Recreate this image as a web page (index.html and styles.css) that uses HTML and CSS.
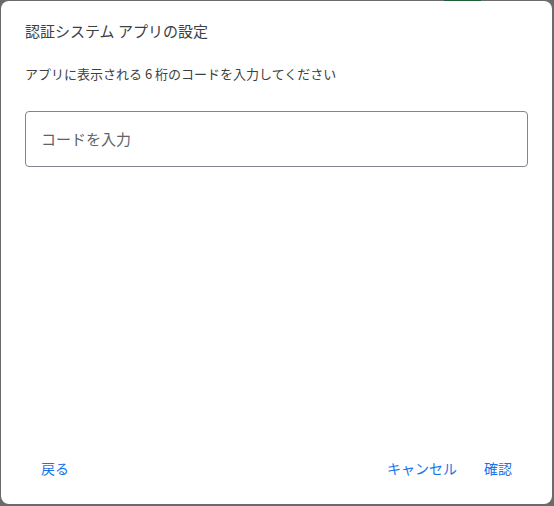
FILE: index.html
```html
<!DOCTYPE html>
<html lang="ja">
<head>
<meta charset="utf-8">
<link rel="stylesheet" href="styles.css">
</head>
<body>
<div class="backdrop">
  <div class="topbar"><span class="green"></span></div>
  <div class="dialog">
    <h1 class="title">認証システム アプリの設定</h1>
    <p class="desc">アプリに表示される 6 桁のコードを入力してください</p>
    <div class="field"><span class="placeholder">コードを入力</span></div>
    <div class="footer">
      <button class="btn">戻る</button>
      <div class="right">
        <button class="btn">キャンセル</button>
        <button class="btn">確認</button>
      </div>
    </div>
  </div>
</div>
</body>
</html>
```
FILE: styles.css
```css
html, body {
  margin: 0;
  padding: 0;
}
body {
  background: #6a6a6a;
  font-family: "Noto Sans CJK JP", "Noto Sans", sans-serif;
  width: 554px;
  height: 506px;
  overflow: hidden;
}
.backdrop {
  position: relative;
  width: 554px;
  height: 506px;
  padding: 1px 2px 2px 1px;
  box-sizing: border-box;
}
.topbar {
  position: absolute;
  top: 0;
  left: 444px;
  width: 37px;
  height: 1px;
  background: #1e5e36;
}
.dialog {
  background: #fff;
  border-radius: 8px;
  height: 100%;
  box-sizing: border-box;
  padding: 19px 24px 18px 24px;
  display: flex;
  flex-direction: column;
}
.title {
  margin: 0;
  font-size: 15px;
  font-weight: 400;
  line-height: 22px;
  color: #3c4043;
}
.desc {
  margin: 22px 0 0;
  font-size: 13px;
  line-height: 20px;
  color: #3c4043;
}
.field {
  margin-top: 27px;
  height: 54px;
  border: 1px solid #80868b;
  border-radius: 4px;
  display: flex;
  align-items: center;
  padding-left: 15px;
}
.placeholder {
  font-size: 15px;
  color: #5f6368;
  margin-top: -2px;
}
.footer {
  margin-top: auto;
  display: flex;
  justify-content: space-between;
  align-items: center;
  padding: 0 16px;
}
.right {
  display: flex;
  gap: 27px;
}
.btn {
  font-family: inherit;
  background: none;
  border: none;
  color: #1a73e8;
  font-size: 14px;
  padding: 0;
  height: 36px;
  line-height: 36px;
}
```
